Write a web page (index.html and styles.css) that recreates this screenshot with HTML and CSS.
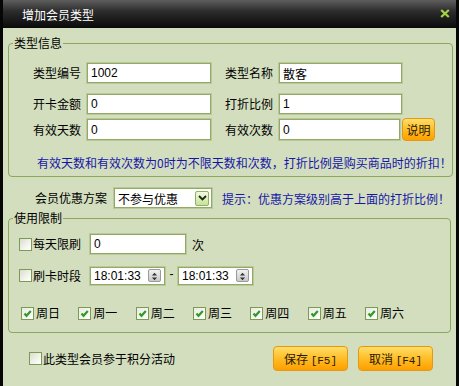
FILE: index.html
```html
<!DOCTYPE html>
<html lang="zh-CN">
<head>
  <meta charset="UTF-8">
  <title>增加会员类型</title>
  <link rel="stylesheet" href="styles.css">
</head>
<body>
  <div class="window">
    <!-- Title bar -->
    <div class="titlebar">
      <span class="title">增加会员类型</span>
      <span class="close">
        <svg width="10" height="9" viewBox="0 0 10 9"><path d="M1.2 1 L8.8 8 M8.8 1 L1.2 8" stroke="#a3d444" stroke-width="2.3"/></svg>
      </span>
    </div>

    <div class="content">
      <!-- Type info -->
      <fieldset class="group group-info">
        <legend>类型信息</legend>
        <div class="info-row row1">
          <label class="lbl">类型编号</label>
          <input class="field w-left" type="text" value="1002">
          <label class="lbl lbl-right">类型名称</label>
          <input class="field w-right" type="text" value="散客">
        </div>
        <div class="info-row row2">
          <label class="lbl">开卡金额</label>
          <input class="field w-left" type="text" value="0">
          <label class="lbl lbl-right">打折比例</label>
          <input class="field w-right" type="text" value="1">
        </div>
        <div class="info-row row3">
          <label class="lbl">有效天数</label>
          <input class="field w-left" type="text" value="0">
          <label class="lbl lbl-right">有效次数</label>
          <input class="field w-short" type="text" value="0">
          <button class="btn btn-small">说明</button>
        </div>
        <p class="note">有效天数和有效次数为0时为不限天数和次数，打折比例是购买商品时的折扣！</p>
      </fieldset>

      <!-- Discount plan -->
      <div class="plan-row">
        <label class="lbl">会员优惠方案</label>
        <div class="select">
          <span class="select-text">不参与优惠</span>
          <span class="select-arrow">
            <svg width="9" height="6" viewBox="0 0 9 6"><path d="M1 1 L4.5 4.5 L8 1" fill="none" stroke="#1d2a10" stroke-width="1.8"/></svg>
          </span>
        </div>
        <span class="hint">提示：优惠方案级别高于上面的打折比例！</span>
      </div>

      <!-- Limits -->
      <fieldset class="group group-limit">
        <legend>使用限制</legend>
        <div class="limit-row lrow1">
          <span class="cb"></span>
          <span class="cb-text">每天限刷</span>
          <input class="field w-count" type="text" value="0">
          <span class="unit">次</span>
        </div>
        <div class="limit-row lrow2">
          <span class="cb"></span>
          <span class="cb-text">刷卡时段</span>
          <div class="time">
            <span class="time-text">18:01:33</span>
            <span class="spin">
              <svg width="13" height="13" viewBox="0 0 13 13"><path d="M6.5 2 L9.5 5.2 L3.5 5.2 Z M6.5 11 L9.5 7.8 L3.5 7.8 Z" fill="#333"/></svg>
            </span>
          </div>
          <span class="dash">-</span>
          <div class="time">
            <span class="time-text">18:01:33</span>
            <span class="spin">
              <svg width="13" height="13" viewBox="0 0 13 13"><path d="M6.5 2 L9.5 5.2 L3.5 5.2 Z M6.5 11 L9.5 7.8 L3.5 7.8 Z" fill="#333"/></svg>
            </span>
          </div>
        </div>
        <div class="week-row">
          <div class="day"><span class="cb checked"><svg width="11" height="11" viewBox="0 0 11 11"><path d="M2.5 5.5 L4.5 7.8 L8.8 3" fill="none" stroke="#2f9b2a" stroke-width="2.2"/></svg></span><span>周日</span></div>
          <div class="day"><span class="cb checked"><svg width="11" height="11" viewBox="0 0 11 11"><path d="M2.5 5.5 L4.5 7.8 L8.8 3" fill="none" stroke="#2f9b2a" stroke-width="2.2"/></svg></span><span>周一</span></div>
          <div class="day"><span class="cb checked"><svg width="11" height="11" viewBox="0 0 11 11"><path d="M2.5 5.5 L4.5 7.8 L8.8 3" fill="none" stroke="#2f9b2a" stroke-width="2.2"/></svg></span><span>周二</span></div>
          <div class="day"><span class="cb checked"><svg width="11" height="11" viewBox="0 0 11 11"><path d="M2.5 5.5 L4.5 7.8 L8.8 3" fill="none" stroke="#2f9b2a" stroke-width="2.2"/></svg></span><span>周三</span></div>
          <div class="day"><span class="cb checked"><svg width="11" height="11" viewBox="0 0 11 11"><path d="M2.5 5.5 L4.5 7.8 L8.8 3" fill="none" stroke="#2f9b2a" stroke-width="2.2"/></svg></span><span>周四</span></div>
          <div class="day"><span class="cb checked"><svg width="11" height="11" viewBox="0 0 11 11"><path d="M2.5 5.5 L4.5 7.8 L8.8 3" fill="none" stroke="#2f9b2a" stroke-width="2.2"/></svg></span><span>周五</span></div>
          <div class="day"><span class="cb checked"><svg width="11" height="11" viewBox="0 0 11 11"><path d="M2.5 5.5 L4.5 7.8 L8.8 3" fill="none" stroke="#2f9b2a" stroke-width="2.2"/></svg></span><span>周六</span></div>
        </div>
      </fieldset>

      <!-- Footer -->
      <div class="footer">
        <div class="points">
          <span class="cb"></span>
          <span class="cb-text">此类型会员参于积分活动</span>
        </div>
        <div class="actions">
          <button class="btn btn-big">保存 <span class="key">[F5]</span></button>
          <button class="btn btn-big">取消 <span class="key">[F4]</span></button>
        </div>
      </div>
    </div>
  </div>
</body>
</html>
```

FILE: styles.css
```css
/* General styles */
* {
  margin: 0;
  padding: 0;
  box-sizing: border-box;
}
body {
  width: 459px;
  height: 386px;
  overflow: hidden;
  font-family: "Noto Sans CJK SC", sans-serif;
  font-size: 12px;
  color: #000;
  background-color: #d3debe;
}
.window {
  width: 459px;
  height: 386px;
  border-left: 3px solid #060606;
  border-right: 3px solid #060606;
  background-color: #d3debe;
}

/* Title bar */
.titlebar {
  height: 28px;
  display: flex;
  align-items: center;
  justify-content: space-between;
  padding: 0 6px 0 19px;
  background: linear-gradient(#5e5e5e 0%, #2c2c2c 40%, #0a0a0a 100%);
  color: #fff;
}
.title {
  font-size: 12px;
  line-height: 16px;
  margin-top: 2px;
}
.close {
  display: flex;
  margin-top: -1px;
}

.content {
  padding: 0 5px;
}

/* Group boxes */
.group {
  border: 1px solid #8ba85b;
  border-radius: 4px;
}
.group legend {
  margin-left: 4px;
  padding: 0 1px;
  line-height: 16px;
}
.group-info {
  margin-top: 7px;
  padding: 12px 0 5px 0;
}
.group-limit {
  margin-top: 2px;
  padding: 8px 0 11px 0;
}

.lbl {
  display: inline-block;
  line-height: 16px;
  white-space: nowrap;
}
.field {
  height: 20px;
  border: 1px solid #93aa66;
  box-shadow: 0 0 0 1px #b9c99a;
  background-color: #fff;
  padding: 0 3px;
  font-family: "Liberation Sans", "Noto Sans CJK SC", sans-serif;
  font-size: 12px;
  color: #000;
  outline: none;
}

/* Type info rows */
.info-row {
  display: flex;
  align-items: center;
  padding-left: 24px;
}
.info-row .lbl {
  width: 48px;
  margin-right: 6px;
}
.info-row .lbl-right {
  margin-left: 14px;
}
.row1 {
  height: 20px;
}
.row2 {
  height: 20px;
  margin-top: 11px;
}
.row3 {
  height: 23px;
  margin-top: 4px;
}
.row3 .field {
  height: 21px;
}
.w-left {
  width: 124px;
}
.w-right {
  width: 123px;
}
.w-short {
  width: 121px;
}
.note {
  margin-top: 14px;
  padding-left: 28px;
  line-height: 16px;
  color: #1616a8;
  white-space: nowrap;
}

/* Buttons */
.btn {
  border: 1px solid #e29a12;
  border-radius: 4px;
  background: linear-gradient(#ffde6a 0%, #ffc02c 45%, #ff9f00 100%);
  color: #2a1a00;
  font-family: "Noto Sans CJK SC", sans-serif;
  font-size: 12px;
  cursor: pointer;
}
.btn-small {
  width: 33px;
  height: 23px;
  margin-left: 2px;
}
.btn-big {
  width: 75px;
  height: 25px;
}
.key {
  font-family: "Liberation Mono", monospace;
  font-size: 11px;
}

/* Discount plan */
.plan-row {
  display: flex;
  align-items: center;
  height: 20px;
  margin-top: 11px;
  padding-left: 27px;
}
.plan-row .lbl {
  margin-right: 7px;
}
.select {
  width: 98px;
  height: 20px;
  display: flex;
  align-items: center;
  justify-content: space-between;
  border: 1px solid #93aa66;
  box-shadow: 0 0 0 1px #b9c99a;
  background-color: #fff;
  padding: 0 2px 0 3px;
}
.select-arrow {
  width: 14px;
  height: 15px;
  display: flex;
  align-items: center;
  justify-content: center;
  border: 1px solid #8fb05c;
  border-radius: 2px;
  background: linear-gradient(#f3f9e2, #c7e29a);
}
.hint {
  margin-left: 10px;
  color: #1616a8;
  white-space: nowrap;
}

/* Checkboxes */
.cb {
  width: 13px;
  height: 13px;
  display: inline-flex;
  align-items: center;
  justify-content: center;
  flex-shrink: 0;
  border: 1px solid #7d9a55;
  background: linear-gradient(135deg, #d9dccf 0%, #f4f4ee 60%, #ffffff 100%);
}
.cb.checked {
  background: linear-gradient(135deg, #e9ecdf, #ffffff);
}
.cb-text {
  margin-left: 1px;
  line-height: 16px;
  white-space: nowrap;
}

/* Limit rows */
.limit-row {
  display: flex;
  align-items: center;
  padding-left: 10px;
}
.lrow1 {
  height: 20px;
}
.lrow2 {
  height: 19px;
  margin-top: 12px;
}
.limit-row .cb-text {
  margin-right: 9px;
}
.w-count {
  width: 96px;
}
.unit {
  margin-left: 6px;
}
.time {
  width: 75px;
  height: 18px;
  display: flex;
  align-items: center;
  justify-content: space-between;
  border: 1px solid #93aa66;
  box-shadow: 0 0 0 1px #b9c99a;
  background-color: #fff;
  padding: 0 3px 0 3px;
  font-family: "Liberation Sans", sans-serif;
  font-size: 12px;
}
.spin {
  width: 13px;
  height: 13px;
  display: flex;
  border: 1px solid #9a9a9a;
  border-radius: 2px;
  background: linear-gradient(#f2f2f2, #c9c9c9);
}
.dash {
  width: 13px;
  text-align: center;
  font-family: "Liberation Sans", sans-serif;
  margin-top: -4px;
}

/* Week days */
.week-row {
  display: grid;
  grid-template-columns: repeat(7, 57.33px);
  height: 16px;
  margin-top: 20px;
  padding-left: 12px;
}
.day {
  display: flex;
  align-items: center;
  gap: 2px;
  line-height: 16px;
  white-space: nowrap;
}

/* Footer */
.footer {
  display: flex;
  align-items: center;
  justify-content: space-between;
  height: 25px;
  margin-top: 13px;
  padding: 0 18px 0 21px;
}
.points {
  display: flex;
  align-items: center;
}
.actions {
  display: flex;
  gap: 10px;
}
```
